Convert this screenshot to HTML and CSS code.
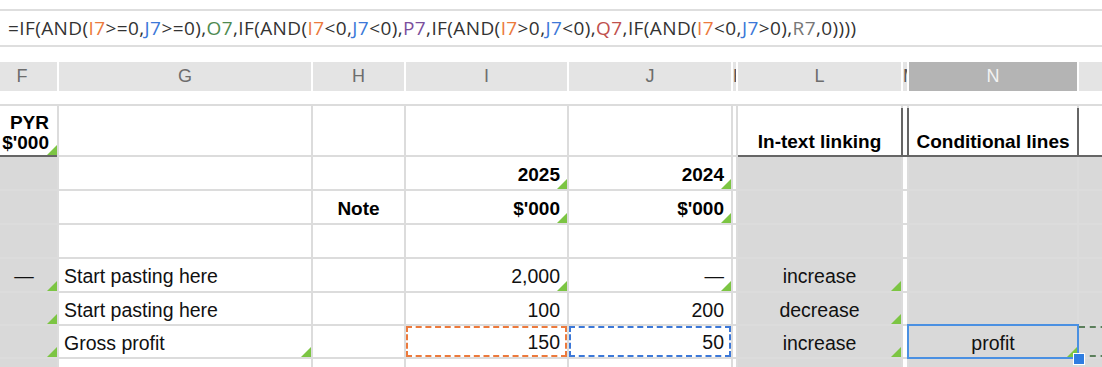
FILE: index.html
```html
<!DOCTYPE html>
<html lang="en">
<head>
    <meta charset="UTF-8">
    <meta name="viewport" content="width=device-width, initial-scale=1.0">
    <title>Conditional lines</title>
    <link rel="stylesheet" href="styles.css">
</head>
<body>
    <div class="formula-bar">
        <span>=IF(AND(<span class="ref-i">I7</span>&gt;=0,<span class="ref-j">J7</span>&gt;=0),<span class="ref-o">O7</span>,IF(AND(<span class="ref-i">I7</span>&lt;0,<span class="ref-j">J7</span>&lt;0),<span class="ref-p">P7</span>,IF(AND(<span class="ref-i">I7</span>&gt;0,<span class="ref-j">J7</span>&lt;0),<span class="ref-q">Q7</span>,IF(AND(<span class="ref-i">I7</span>&lt;0,<span class="ref-j">J7</span>&gt;0),<span class="ref-r">R7</span>,0))))</span>
    </div>

    <div class="col-heads">
        <div class="head">F</div>
        <div class="head">G</div>
        <div class="head">H</div>
        <div class="head">I</div>
        <div class="head">J</div>
        <div class="head narrow">K</div>
        <div class="head">L</div>
        <div class="head narrow">M</div>
        <div class="head active">N</div>
        <div class="head"></div>
    </div>

    <div class="sheet">
        <!-- row 1 -->
        <div class="cell bold right bottom title-line two-lines tri">PYR<br>$'000</div>
        <div class="cell"></div>
        <div class="cell"></div>
        <div class="cell"></div>
        <div class="cell"></div>
        <div class="cell"></div>
        <div class="cell bold center bottom title-line wide-line">In-text linking</div>
        <div class="cell title-line wide-line"></div>
        <div class="cell bold center bottom title-line wide-line">Conditional lines</div>
        <div class="cell title-line wide-line"></div>

        <!-- row 2 -->
        <div class="cell gray"></div>
        <div class="cell"></div>
        <div class="cell"></div>
        <div class="cell bold right tri">2025</div>
        <div class="cell bold right tri">2024</div>
        <div class="cell"></div>
        <div class="cell gray"></div>
        <div class="cell"></div>
        <div class="cell gray"></div>
        <div class="cell gray"></div>

        <!-- row 3 -->
        <div class="cell gray"></div>
        <div class="cell"></div>
        <div class="cell bold center">Note</div>
        <div class="cell bold right tri">$'000</div>
        <div class="cell bold right tri">$'000</div>
        <div class="cell"></div>
        <div class="cell gray"></div>
        <div class="cell"></div>
        <div class="cell gray"></div>
        <div class="cell gray"></div>

        <!-- row 4 -->
        <div class="cell gray"></div>
        <div class="cell"></div>
        <div class="cell"></div>
        <div class="cell"></div>
        <div class="cell"></div>
        <div class="cell"></div>
        <div class="cell gray"></div>
        <div class="cell"></div>
        <div class="cell gray"></div>
        <div class="cell gray"></div>

        <!-- row 5 -->
        <div class="cell gray center dash tri">—</div>
        <div class="cell left">Start pasting here</div>
        <div class="cell"></div>
        <div class="cell right tri">2,000</div>
        <div class="cell right tri">—</div>
        <div class="cell"></div>
        <div class="cell gray center tri">increase</div>
        <div class="cell"></div>
        <div class="cell gray"></div>
        <div class="cell gray"></div>

        <!-- row 6 -->
        <div class="cell gray tri"></div>
        <div class="cell left">Start pasting here</div>
        <div class="cell"></div>
        <div class="cell right">100</div>
        <div class="cell right">200</div>
        <div class="cell"></div>
        <div class="cell gray center tri">decrease</div>
        <div class="cell"></div>
        <div class="cell gray"></div>
        <div class="cell gray"></div>

        <!-- row 7 -->
        <div class="cell gray tri"></div>
        <div class="cell left tri">Gross profit</div>
        <div class="cell"></div>
        <div class="cell right ref-box-i">150</div>
        <div class="cell right ref-box-j">50</div>
        <div class="cell"></div>
        <div class="cell gray center tri">increase</div>
        <div class="cell"></div>
        <div class="cell gray center tri selected">profit<span class="handle"></span></div>
        <div class="cell gray ref-box-o"></div>

        <!-- row 8 -->
        <div class="cell gray"></div>
        <div class="cell"></div>
        <div class="cell"></div>
        <div class="cell"></div>
        <div class="cell"></div>
        <div class="cell"></div>
        <div class="cell gray"></div>
        <div class="cell"></div>
        <div class="cell gray"></div>
        <div class="cell gray"></div>
    </div>
</body>
</html>
```

FILE: styles.css
```css
html, body {
    margin: 0;
    overflow: hidden;
    background-color: #fff;
}

body {
    width: 1102px;
    height: 367px;
    font-family: "Liberation Sans", Arial, sans-serif;
}

.formula-bar {
    margin-top: 9px;
    height: 34px;
    border-top: 2px solid #dedede;
    border-bottom: 2px solid #dedede;
    display: flex;
    align-items: center;
    padding-left: 8px;
    font-family: "Open Sans", sans-serif;
    font-size: 19px;
    letter-spacing: 0.4px;
    color: #333;
    white-space: nowrap;
}

.ref-i { color: #ec7a3c; }
.ref-j { color: #3c78d8; }
.ref-o { color: #4f8a4f; }
.ref-p { color: #7b4f9d; }
.ref-q { color: #c0504d; }
.ref-r { color: #777; }

.col-heads,
.sheet {
    display: grid;
    grid-template-columns: 70px 252px 91px 161px 162px 3px 163px 4px 168px 60px;
    column-gap: 2px;
    margin-left: -13px;
}

.col-heads {
    margin-top: 15px;
    height: 29px;
}

.head {
    background-color: #e4e4e4;
    color: #6d6d6d;
    font-size: 18px;
    display: flex;
    align-items: center;
    justify-content: center;
    overflow: hidden;
}

.head.narrow {
    justify-content: flex-start;
    color: #555;
}

.head.active {
    background-color: #b4b4b4;
    color: #f2f2f2;
}

.sheet {
    margin-top: 13px;
    padding-top: 2px;
    row-gap: 2px;
    grid-template-rows: 49px 32px 32px 32px 32px 31px 31px 32px;
    background-color: #dcdcdc;
}

.cell {
    position: relative;
    box-sizing: border-box;
    background-color: #fff;
    color: #111;
    font-size: 19.5px;
    display: flex;
    align-items: center;
    padding-top: 3px;
    white-space: nowrap;
}

.cell.gray {
    background-color: #d9d9d9;
}

.bold {
    font-weight: bold;
    font-size: 19px;
    color: #000;
}

.left {
    padding-left: 5px;
}

.right {
    justify-content: flex-end;
    padding-right: 7px;
}

.center {
    justify-content: center;
}

.dash {
    padding-left: 4px;
}

.bottom {
    align-items: flex-end;
    padding-top: 0;
    padding-bottom: 3px;
    line-height: 20px;
}

.two-lines {
    text-align: right;
    padding-right: 8px;
    padding-bottom: 2px;
}

.title-line {
    box-shadow: 0 2px 0 #666;
}

.title-line.wide-line {
    box-shadow: 0 2px 0 #666, 2px 2px 0 #666;
}

.tri::after {
    content: '';
    position: absolute;
    right: 0;
    bottom: 0;
    width: 10px;
    height: 10px;
    background-color: #7cc543;
    clip-path: polygon(100% 0, 100% 100%, 0 100%);
}

.ref-box-i {
    border: 2px dashed #ec7a3c;
    padding-right: 5px;
    padding-top: 1px;
}

.ref-box-j {
    border: 2px dashed #3c78d8;
    padding-right: 5px;
    padding-top: 1px;
}

.ref-box-o {
    border-top: 2px dashed #5b7f5b;
    border-bottom: 2px dashed #5b7f5b;
}

.selected {
    z-index: 2;
    outline: 2px solid #4a90e2;
}

.handle {
    position: absolute;
    right: -8px;
    bottom: -8px;
    width: 10px;
    height: 10px;
    background-color: #2f7de1;
    border: 1px solid #fff;
    z-index: 3;
}
```
